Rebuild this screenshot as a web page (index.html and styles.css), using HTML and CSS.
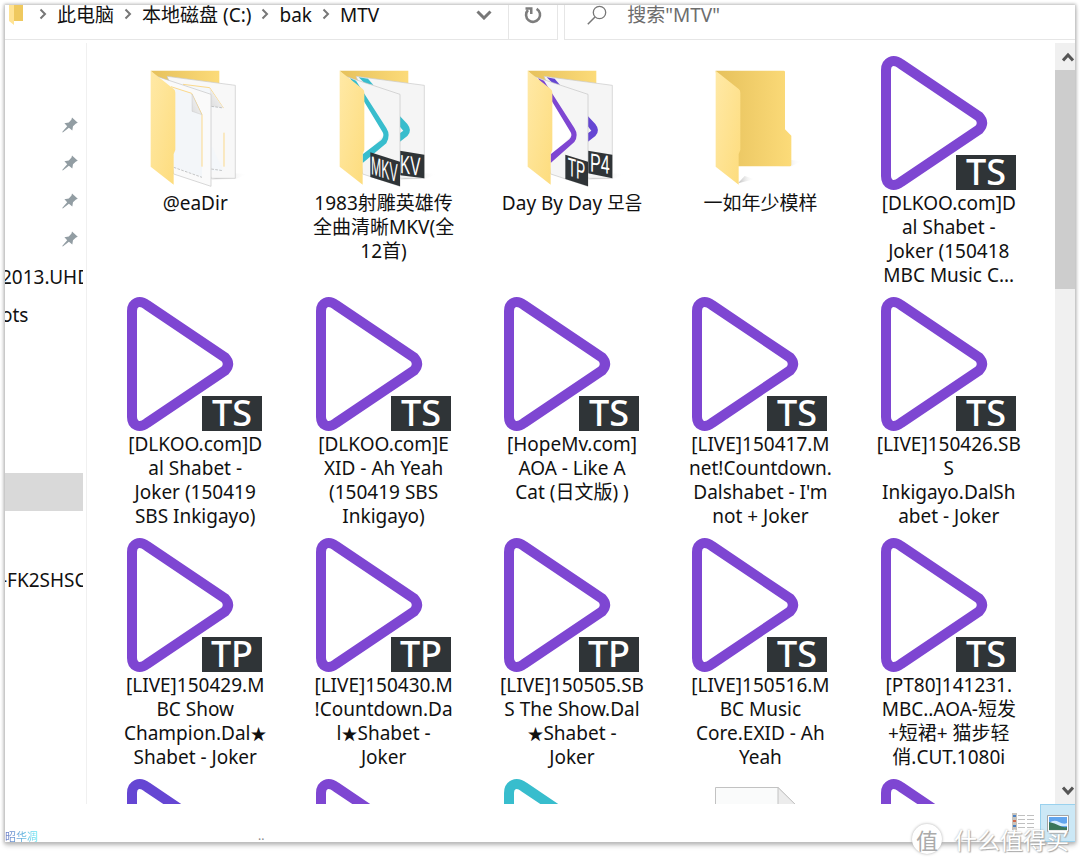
FILE: index.html
```html
<!DOCTYPE html>
<html lang="zh-CN">
<head>
<meta charset="utf-8">
<title>MTV</title>
<link rel="stylesheet" href="styles.css">
</head>
<body>
<svg class="defs" aria-hidden="true">
  <defs>
    <linearGradient id="front" x1="0" y1="0" x2="1" y2="1"><stop offset="0" stop-color="#ffe9a6"/><stop offset="1" stop-color="#fddc7d"/></linearGradient>
    <linearGradient id="back" x1="0" y1="0" x2="1" y2="0"><stop offset="0" stop-color="#e6c15c"/><stop offset="1" stop-color="#fcdb79"/></linearGradient>
    <linearGradient id="fold" x1="0" y1="1" x2="1" y2="0"><stop offset="0" stop-color="#dcdcdc"/><stop offset="1" stop-color="#fafafa"/></linearGradient>
    <linearGradient id="shade" x1="0" y1="0" x2="1" y2="0"><stop offset="0" stop-color="#bbb"/><stop offset="1" stop-color="#fff" stop-opacity="0"/></linearGradient>
    <symbol id="play" viewBox="0 0 136 134"><path d="M5 14C5 6 12 2 20 8L98 60.5Q104 67 98 73.5L20 126C12 132 5 128 5 120Z" fill="none" stroke="currentColor" stroke-width="10" stroke-linejoin="round"/></symbol>
    <symbol id="badge" viewBox="0 0 136 134"><path d="M75 99h60v35H75z" fill="#2f3437"/></symbol>
    <symbol id="front-flap" viewBox="-8 18 408 402"><path d="M63 62L132 117Q137 121 137 128V300L132 312V404L63 350Z" fill="url(#front)"/></symbol>
    <symbol id="pin" viewBox="0 0 16 16"><path d="M10 0.5L15.8 5.8L14 6.6L11 9.2L10.3 13.6L6.9 10.8L0.8 15.6L0.2 15L5.2 9.2L2.4 6.2L6.8 5.4L9.5 2.4Z" fill="#929da3"/></symbol>
    <symbol id="chev" viewBox="0 0 8 12"><path d="M1.5 1.5L6 6L1.5 10.5" fill="none" stroke="#777" stroke-width="2"/></symbol>
  </defs>
</svg>

<div class="window">
  <header class="bar">
    <nav class="address" aria-label="地址">
      <svg class="mini" viewBox="0 0 15 20"><path d="M0 0h14v16H5z" fill="#efc95f"/><path d="M0 0h5v20l-5-4z" fill="#ffe394"/></svg>
      <svg class="sep"><use href="#chev"/></svg><a href="#pc">此电脑</a>
      <svg class="sep"><use href="#chev"/></svg><a href="#c">本地磁盘 (C:)</a>
      <svg class="sep"><use href="#chev"/></svg><a href="#bak">bak</a>
      <svg class="sep"><use href="#chev"/></svg><a href="#mtv">MTV</a>
      <button class="drop" aria-label="历史记录"><svg viewBox="0 0 16 10"><path d="M1.5 1.5L8 8L14.5 1.5" fill="none" stroke="#777" stroke-width="3"/></svg></button>
      <button class="refresh" aria-label="刷新"><svg viewBox="0 0 18 18"><path d="M12.6 2.8A7 7 0 1 1 4 4" fill="none" stroke="#7d7d7d" stroke-width="2.6"/><path d="M1.5 1.2H8.5V8H6V3.8H1.5z" fill="#7d7d7d"/></svg></button>
    </nav>
    <label class="search">
      <svg viewBox="0 0 20 20"><circle cx="12.5" cy="7.5" r="6.2" fill="none" stroke="#777" stroke-width="1.3"/><path d="M8 12L.8 19.2" stroke="#777" stroke-width="1.5"/></svg>
      <input type="text" aria-label="搜索" placeholder='搜索"MTV"'>
    </label>
  </header>

  <div class="body">
    <nav class="tree" aria-label="导航">
      <div class="group quick">
        <a href="#q1" aria-label="固定 1"><svg><use href="#pin"/></svg></a>
        <a href="#q2" aria-label="固定 2"><svg><use href="#pin"/></svg></a>
        <a href="#q3" aria-label="固定 3"><svg><use href="#pin"/></svg></a>
        <a href="#q4" aria-label="固定 4"><svg><use href="#pin"/></svg></a>
        <a href="#q5" class="cut">2013.UHD</a>
        <a href="#q6" class="cut">ots</a>
      </div>
      <div class="group drives"><a href="#pc" class="selected" aria-label="此电脑"></a></div>
      <div class="group network"><a href="#net" class="cut">-FK2SHSC</a></div>
    </nav>

    <main class="files">
      <a class="tile" href="#f1">
        <svg class="icon" viewBox="-8 18 408 402">
          <path d="M245 388L315 370L355 372L318 387Z" fill="url(#shade)"/>
          <path d="M63 62H269V125H120Z" fill="url(#back)"/>
          <path d="M112 79L317 106V385H245Z" fill="#f8f8f8" stroke="#c9c9c9" stroke-width="2"/>
          <path d="M160 103L240 113L281 174H245V362H281Z" fill="#f4f7fa"/>
          <path d="M160 103L240 113L281 174M283 248V350" fill="none" stroke="#fbd98b" stroke-width="3"/>
          <path d="M240 115L281 174L245 169Z" fill="url(#fold)"/>
          <path d="M245 169L281 174M245 357L280 362" stroke="#aaa" stroke-width="2" stroke-dasharray="8 4"/>
          <path d="M84 80L244 133V409L132 372Z" fill="#fafafa" stroke="#c4c4c4" stroke-width="2"/>
          <path d="M124 110L186 130L217 194V382L132 352Z" fill="#f3f6f9"/>
          <path d="M124 110L186 130L217 194V350" fill="none" stroke="#fbd98b" stroke-width="3"/>
          <path d="M187 132L216 194L187 184Z" fill="url(#fold)" stroke="#bbb"/>
          <path d="M132 352L217 382" stroke="#aaa" stroke-width="2" stroke-dasharray="8 4"/>
          <use href="#front-flap" x="-8" y="18" width="408" height="402"/>
        </svg>
        <span>@eaDir</span>
      </a>
      <a class="tile" href="#f2">
        <svg class="icon teal" viewBox="-8 18 408 402">
          <path d="M245 388L315 370L355 372L318 387Z" fill="url(#shade)"/>
          <path d="M63 62H269V125H120Z" fill="url(#back)"/>
          <path d="M112 79L317 106V385H245Z" fill="#f5f5f5" stroke="#c9c9c9" stroke-width="2"/>
          <path d="M120 82L148 86L164 105L138 100Z" fill="currentColor"/>
          <path d="M240 194L266 222Q282 242 266 258L240 278V252L254 242L240 226Z" fill="currentColor"/>
          <path d="M244 302L317 314V385L244 376Z" fill="#2f3437"/>
          <text class="paper-label" transform="matrix(1 .15 0 1.7 244 368)">KV</text>
          <path d="M84 80L244 133V409L132 372Z" fill="#f5f5f5" stroke="#c4c4c4" stroke-width="2"/>
          <path d="M132 130L200 250L132 325Z" fill="#fff"/>
          <path d="M94 85L112 92L203 234Q217 256 203 280L132 339V313L188 270Q198 258 192 247Z" fill="currentColor"/>
          <path d="M155 307L244 335V409L155 381Z" fill="#2f3437"/>
          <text class="paper-label" transform="matrix(.8 .25 0 1.7 157 372)">MKV</text>
          <use href="#front-flap" x="-8" y="18" width="408" height="402"/>
        </svg>
        <span>1983射雕英雄传<br>全曲清晰MKV(全<br>12首)</span>
      </a>
      <a class="tile" href="#f3">
        <svg class="icon" viewBox="-8 18 408 402">
          <path d="M245 388L315 370L355 372L318 387Z" fill="url(#shade)"/>
          <path d="M63 62H269V125H120Z" fill="url(#back)"/>
          <path d="M112 79L317 106V385H245Z" fill="#f5f5f5" stroke="#c9c9c9" stroke-width="2"/>
          <path d="M120 82L144 86L160 105L138 100Z" fill="#6546d3"/>
          <path d="M240 194L266 222Q282 242 266 258L240 278V252L254 242L240 224Z" fill="#6546d3"/>
          <path d="M244 302L317 314V385L244 370Z" fill="#2f3437"/>
          <text class="paper-label" transform="matrix(1.05 .15 0 1.7 250 364)">P4</text>
          <path d="M84 80L244 133V409L132 372Z" fill="#f5f5f5" stroke="#c4c4c4" stroke-width="2"/>
          <path d="M132 130L200 250L132 325Z" fill="#fff"/>
          <path d="M94 85L112 92L203 234Q217 256 203 276L132 339V313L188 268Q198 258 192 247Z" fill="currentColor"/>
          <path d="M176 314L244 335V409L176 387Z" fill="#2f3437"/>
          <text class="paper-label" transform="matrix(.9 .28 0 1.7 183 376)">TP</text>
          <use href="#front-flap" x="-8" y="18" width="408" height="402"/>
        </svg>
        <span>Day By Day 모음</span>
      </a>
      <a class="tile" href="#f4">
        <svg class="icon" viewBox="-8 18 408 402">
          <path d="M130 400L150 378L180 388Z" fill="url(#shade)"/>
          <path d="M250 348L290 330L320 334L290 349Z" fill="url(#shade)"/>
          <path d="M63 62H267Q271 62 271 66V238L290 257V344Q290 349 285 349H100Z" fill="url(#back)"/>
          <use href="#front-flap" x="-8" y="18" width="408" height="402"/>
        </svg>
        <span>一如年少模样</span>
      </a>
      <a class="tile" href="#f5"><svg class="icon" viewBox="0 0 136 134"><use href="#play"/><use href="#badge"/><text class="ext" x="105" y="129">TS</text></svg><span>[DLKOO.com]D<br>al Shabet -<br>Joker (150418<br>MBC Music C...</span></a>

      <a class="tile" href="#f6"><svg class="icon" viewBox="0 0 136 134"><use href="#play"/><use href="#badge"/><text class="ext" x="105" y="129">TS</text></svg><span>[DLKOO.com]D<br>al Shabet -<br>Joker (150419<br>SBS Inkigayo)</span></a>
      <a class="tile" href="#f7"><svg class="icon" viewBox="0 0 136 134"><use href="#play"/><use href="#badge"/><text class="ext" x="105" y="129">TS</text></svg><span>[DLKOO.com]E<br>XID - Ah Yeah<br>(150419 SBS<br>Inkigayo)</span></a>
      <a class="tile" href="#f8"><svg class="icon" viewBox="0 0 136 134"><use href="#play"/><use href="#badge"/><text class="ext" x="105" y="129">TS</text></svg><span>[HopeMv.com]<br>AOA - Like A<br>Cat (日文版) )</span></a>
      <a class="tile" href="#f9"><svg class="icon" viewBox="0 0 136 134"><use href="#play"/><use href="#badge"/><text class="ext" x="105" y="129">TS</text></svg><span>[LIVE]150417.M<br>net!Countdown.<br>Dalshabet - I'm<br>not + Joker</span></a>
      <a class="tile" href="#f10"><svg class="icon" viewBox="0 0 136 134"><use href="#play"/><use href="#badge"/><text class="ext" x="105" y="129">TS</text></svg><span>[LIVE]150426.SB<br>S<br>Inkigayo.DalSh<br>abet - Joker</span></a>

      <a class="tile" href="#f11"><svg class="icon" viewBox="0 0 136 134"><use href="#play"/><use href="#badge"/><text class="ext" x="105" y="129">TP</text></svg><span>[LIVE]150429.M<br>BC Show<br>Champion.Dal<i class="star">★</i><br>Shabet - Joker</span></a>
      <a class="tile" href="#f12"><svg class="icon" viewBox="0 0 136 134"><use href="#play"/><use href="#badge"/><text class="ext" x="105" y="129">TP</text></svg><span>[LIVE]150430.M<br>!Countdown.Da<br>l<i class="star">★</i>Shabet -<br>Joker</span></a>
      <a class="tile" href="#f13"><svg class="icon" viewBox="0 0 136 134"><use href="#play"/><use href="#badge"/><text class="ext" x="105" y="129">TP</text></svg><span>[LIVE]150505.SB<br>S The Show.Dal<br><i class="star">★</i>Shabet -<br>Joker</span></a>
      <a class="tile" href="#f14"><svg class="icon" viewBox="0 0 136 134"><use href="#play"/><use href="#badge"/><text class="ext" x="105" y="129">TS</text></svg><span>[LIVE]150516.M<br>BC Music<br>Core.EXID - Ah<br>Yeah</span></a>
      <a class="tile" href="#f15"><svg class="icon" viewBox="0 0 136 134"><use href="#play"/><use href="#badge"/><text class="ext" x="105" y="129">TS</text></svg><span>[PT80]141231.<br>MBC..AOA-短发<br>+短裙+ 猫步轻<br>俏.CUT.1080i</span></a>

      <a class="tile" href="#f16" aria-label="视频"><svg class="icon indigo" viewBox="0 0 136 134"><use href="#play"/></svg></a>
      <a class="tile" href="#f17" aria-label="视频"><svg class="icon" viewBox="0 0 136 134"><use href="#play"/></svg></a>
      <a class="tile" href="#f18" aria-label="视频"><svg class="icon teal" viewBox="0 0 136 134"><use href="#play"/></svg></a>
      <a class="tile" href="#f19" aria-label="文档"><svg class="icon" viewBox="0 0 136 134"><path d="M23.5 8.500H86L110 32V134H23.5z" fill="#fafbfb" stroke="#c2c2c2"/><path d="M86 8.500V32H110z" fill="#ececec" stroke="#c2c2c2"/></svg></a>
      <a class="tile" href="#f20" aria-label="视频"><svg class="icon" viewBox="0 0 136 134"><use href="#play"/></svg></a>
    </main>

    <div class="scroll">
      <button aria-label="向上滚动"><svg viewBox="0 0 12 10"><path d="M1 8.500L6 3L11 8.500" fill="none" stroke="#555" stroke-width="3"/></svg></button>
      <div class="track"><div class="thumb"></div></div>
      <button aria-label="向下滚动"><svg viewBox="0 0 12 10"><path d="M1 1.500L6 7L11 1.500" fill="none" stroke="#555" stroke-width="3"/></svg></button>
    </div>
  </div>

  <footer class="status">
    <span class="signature">昭华凋</span>
    <span class="grip">··</span>
    <button class="view" aria-label="详细信息"><svg viewBox="0 0 22 17"><path d="M0 0h5v17H0z" fill="#c9c4bd"/><path d="M1 2h3v2H1zM1 12h3v2H1z" fill="#4e83c4"/><path d="M1 7h3v2H1z" fill="#d2694c"/><path d="M6 2.500H13M15 2.500H22M6 6.500H13M15 6.500H22M6 10.500H13M15 10.500H22M6 14.500H13M15 14.500H22" stroke="#c0c0c0"/></svg></button>
    <button class="view active" aria-label="大图标"><svg viewBox="0 0 22 17"><path d="M.5.5h21v16H.5z" fill="#fff" stroke="#a4a4a4"/><path d="M2 2h18v13H2z" fill="#62a5ee"/><path d="M2 8Q7 4 12 7T20 8V11H2z" fill="#d5ecff"/><path d="M2 7Q8 8 12 10.500T20 12V15H2z" fill="#39765b"/></svg></button>
  </footer>
  <div class="watermark"><b>值</b><span>什么值得买</span></div>
</div>
</body>
</html>
```
FILE: styles.css
```css
* { box-sizing: border-box; }

body {
  margin: 0;
  padding: 5px;
  height: 100vh;
  overflow: hidden;
  background: #fff;
  color: #111;
  font: 19px/24px "Noto Sans", "Noto Sans CJK SC", "Noto Sans CJK KR", sans-serif;
}

a { color: inherit; text-decoration: none; }
button { border: 0; padding: 0; background: none; display: grid; place-items: center; }
.defs { position: absolute; width: 0; height: 0; }

.window {
  position: relative;
  height: calc(100vh - 28px);
  display: flex;
  flex-direction: column;
  background: #fff;
  box-shadow: 0 0 3px 1px #bbb, 0 3px 5px #bbb;
}

/* address bar */
.bar { display: flex; gap: 6px; height: 35px; flex: none; }
.address {
  flex: none;
  width: 51.7%;
  display: flex;
  align-items: center;
  border: solid #e6e6e6;
  border-width: 0 1px 1px 0;
  padding-left: 4px;
}
.address a { height: 34px; line-height: 20px; white-space: nowrap; }
.mini { width: 15px; height: 20px; margin-bottom: 14px; }
.sep { width: 8px; height: 12px; margin: 0 10px 16px 10px; flex: none; }
.mini + .sep { margin-left: 15px; }
.drop { width: 48px; height: 34px; margin-left: auto; padding-bottom: 14px; }
.drop svg { width: 16px; height: 10px; }
.refresh { width: 49px; height: 34px; border-left: 1px solid #e6e6e6; padding-bottom: 14px; }
.refresh svg { width: 18px; height: 18px; }
.search {
  flex: 1;
  display: flex;
  gap: 20px;
  padding: 0 0 14px 22px;
  border: solid #e6e6e6;
  border-width: 0 0 1px 1px;
}
.search svg { width: 20px; height: 20px; flex: none; }
.search input {
  flex: 1;
  min-width: 0;
  height: 20px;
  padding: 0;
  border: 0;
  outline: 0;
  font: inherit;
  line-height: 20px;
}
.search input::placeholder { color: #6d6d6d; opacity: 1; }

.body { flex: 1; min-height: 0; display: flex; padding-top: 3px; }

/* navigation tree */
.tree {
  width: 82px;
  flex: none;
  border-right: 1px solid #f0f0f0;
  padding: 63px 3px 0 0;
  overflow: hidden;
}
.group a {
  display: flex;
  align-items: center;
  height: 38px;
  overflow: hidden;
  white-space: nowrap;
}
.group svg { width: 16px; height: 16px; margin: 0 5px 0 auto; }
.group .cut { text-indent: -4px; }
.drives { margin-top: 139px; }
.network { margin-top: 50px; }
.selected { background: #d9d9d9; }

/* file tiles */
.files {
  flex: 1;
  min-width: 0;
  overflow: hidden;
  display: grid;
  grid-template-columns: repeat(5, 1fr);
  grid-auto-rows: 241px;
  padding: 13px 12px 0 14px;
}
.tile { display: flex; flex-direction: column; align-items: center; gap: 1px; text-align: center; white-space: nowrap; }
.icon { width: 136px; height: 134px; flex: none; color: #7e46d2; }
.teal { color: #38bdcd; }
.indigo { color: #6546d3; }
.ext { font: 500 36px "Noto Sans", sans-serif; fill: #fff; text-anchor: middle; }
.paper-label { font: 500 46px "Liberation Sans", sans-serif; fill: #fff; }
.star { font-size: 16px; line-height: 20px; font-style: normal; }

/* scroll bar */
.scroll { width: 20px; flex: none; display: flex; flex-direction: column; background: #f0f0f0; }
.scroll button { height: 27px; padding-left: 5px; }
.scroll svg { width: 12px; height: 10px; }
.track { flex: 1; }
.thumb { height: 31%; background: #cdcdcd; }

/* status bar */
.status { height: 38px; flex: none; display: flex; align-items: flex-end; }
.signature {
  width: 253px;
  font: 11px/12px "Noto Sans CJK SC", sans-serif;
  color: transparent;
  background: linear-gradient(90deg, #6b78c4, #62e8f4 33px) text;
}
.grip { height: 8px; font-size: 12px; line-height: 12px; color: #888; }
.view { width: 35px; height: 38px; padding-bottom: 4px; }
.grip + .view { margin-left: auto; }
.view svg { width: 22px; height: 17px; }
.active { border: 1px solid #99d1ee; border-right: 0; background: #cce8f6; padding-bottom: 0; }

.watermark {
  position: absolute;
  right: 6px;
  bottom: -12px;
  display: flex;
  align-items: center;
  gap: 12px;
  height: 30px;
  color: #fff;
  font: 23px/30px "Noto Sans CJK SC", sans-serif;
  text-shadow: 0 0 2px #aaa, 1px 1px 1px #aaa;
}
.watermark b {
  width: 30px;
  height: 30px;
  border-radius: 50%;
  background: #fff;
  box-shadow: 0 0 3px #aaa;
  color: #aaa;
  text-align: center;
  text-shadow: none;
  font-size: 22px;
  font-weight: 400;
}
```
